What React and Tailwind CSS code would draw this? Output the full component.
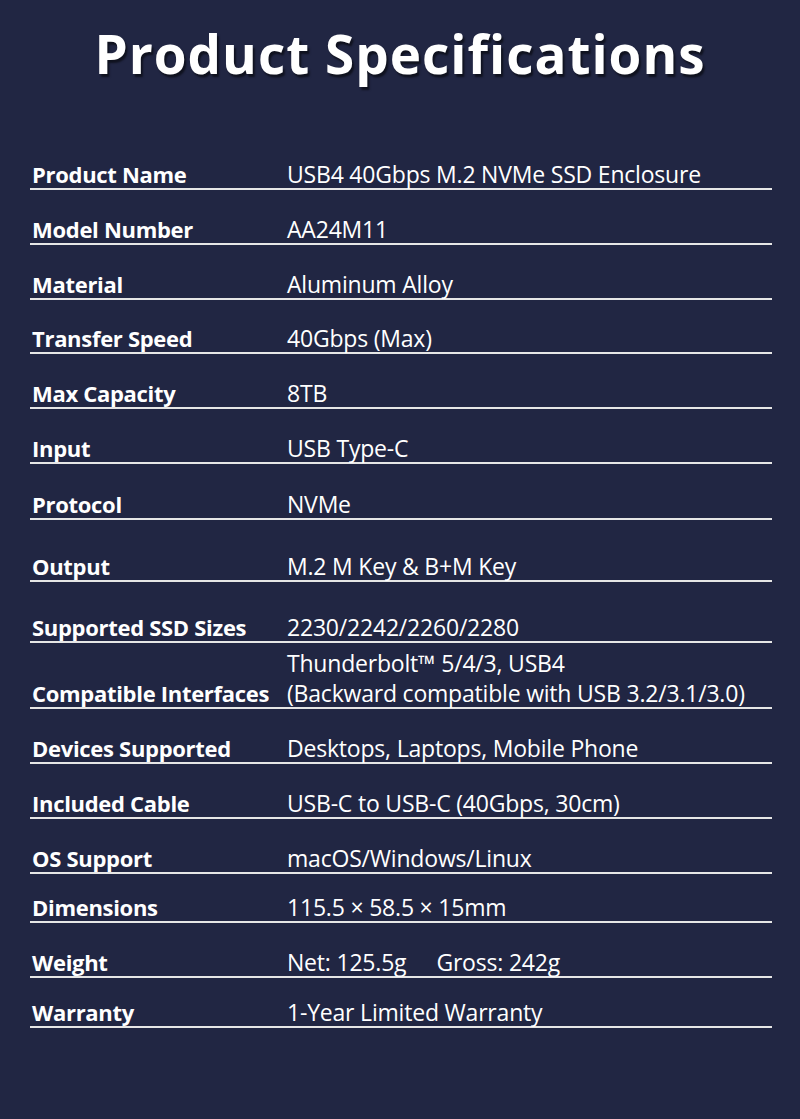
const specs = [
  { label: "Product Name", value: ["USB4 40Gbps M.2 NVMe SSD Enclosure"], h: "h-[55px]" },
  { label: "Model Number", value: ["AA24M11"], h: "h-[55px]" },
  { label: "Material", value: ["Aluminum Alloy"], h: "h-[55px]" },
  { label: "Transfer Speed", value: ["40Gbps (Max)"], h: "h-[54px]" },
  { label: "Max Capacity", value: ["8TB"], h: "h-[55px]" },
  { label: "Input", value: ["USB Type-C"], h: "h-[55px]" },
  { label: "Protocol", value: ["NVMe"], h: "h-[56px]" },
  { label: "Output", value: ["M.2 M Key & B+M Key"], h: "h-[62px]" },
  { label: "Supported SSD Sizes", value: ["2230/2242/2260/2280"], h: "h-[61px]" },
  {
    label: "Compatible Interfaces",
    value: ["Thunderbolt™ 5/4/3, USB4", "(Backward compatible with USB 3.2/3.1/3.0)"],
    h: "h-[66px]",
  },
  { label: "Devices Supported", value: ["Desktops, Laptops, Mobile Phone"], h: "h-[55px]" },
  { label: "Included Cable", value: ["USB-C to USB-C (40Gbps, 30cm)"], h: "h-[55px]" },
  { label: "OS Support", value: ["macOS/Windows/Linux"], h: "h-[55px]" },
  { label: "Dimensions", value: ["115.5 × 58.5 × 15mm"], h: "h-[49px]" },
  { label: "Weight", value: ["Net: 125.5g", "Gross: 242g"], inline: true, h: "h-[55px]" },
  { label: "Warranty", value: ["1-Year Limited Warranty"], h: "h-[50px]" },
];

export default function App() {
  return (
    <div className="w-[800px] h-[1119px] bg-[#212643] text-white font-['Open_Sans',sans-serif] overflow-hidden">
      {/* Title */}
      <h1 className="pt-[21px] h-[135px] text-center text-[53px] leading-[66px] font-bold tracking-[1px] [text-shadow:2px_3px_2px_rgba(0,0,0,0.55)]">
        Product Specifications
      </h1>

      {/* Spec table */}
      <div className="ml-[30px] w-[742px]">
        {specs.map((row) => (
          <div
            key={row.label}
            className={`flex items-end border-b-2 border-[#e6e6e6] pb-[1px] box-border ${row.h}`}
          >
            <div className="w-[257px] pl-[2px] text-[22px] leading-[26px] font-bold shrink-0 tracking-[-0.3px]">
              {row.label}
            </div>
            <div className="text-[23px] leading-[30px] -mb-[2px] tracking-[-0.2px]">
              {row.inline ? (
                <div className="flex gap-[30px]">
                  {row.value.map((v) => (
                    <span key={v}>{v}</span>
                  ))}
                </div>
              ) : (
                row.value.map((v) => <div key={v}>{v}</div>)
              )}
            </div>
          </div>
        ))}
      </div>
    </div>
  );
}
